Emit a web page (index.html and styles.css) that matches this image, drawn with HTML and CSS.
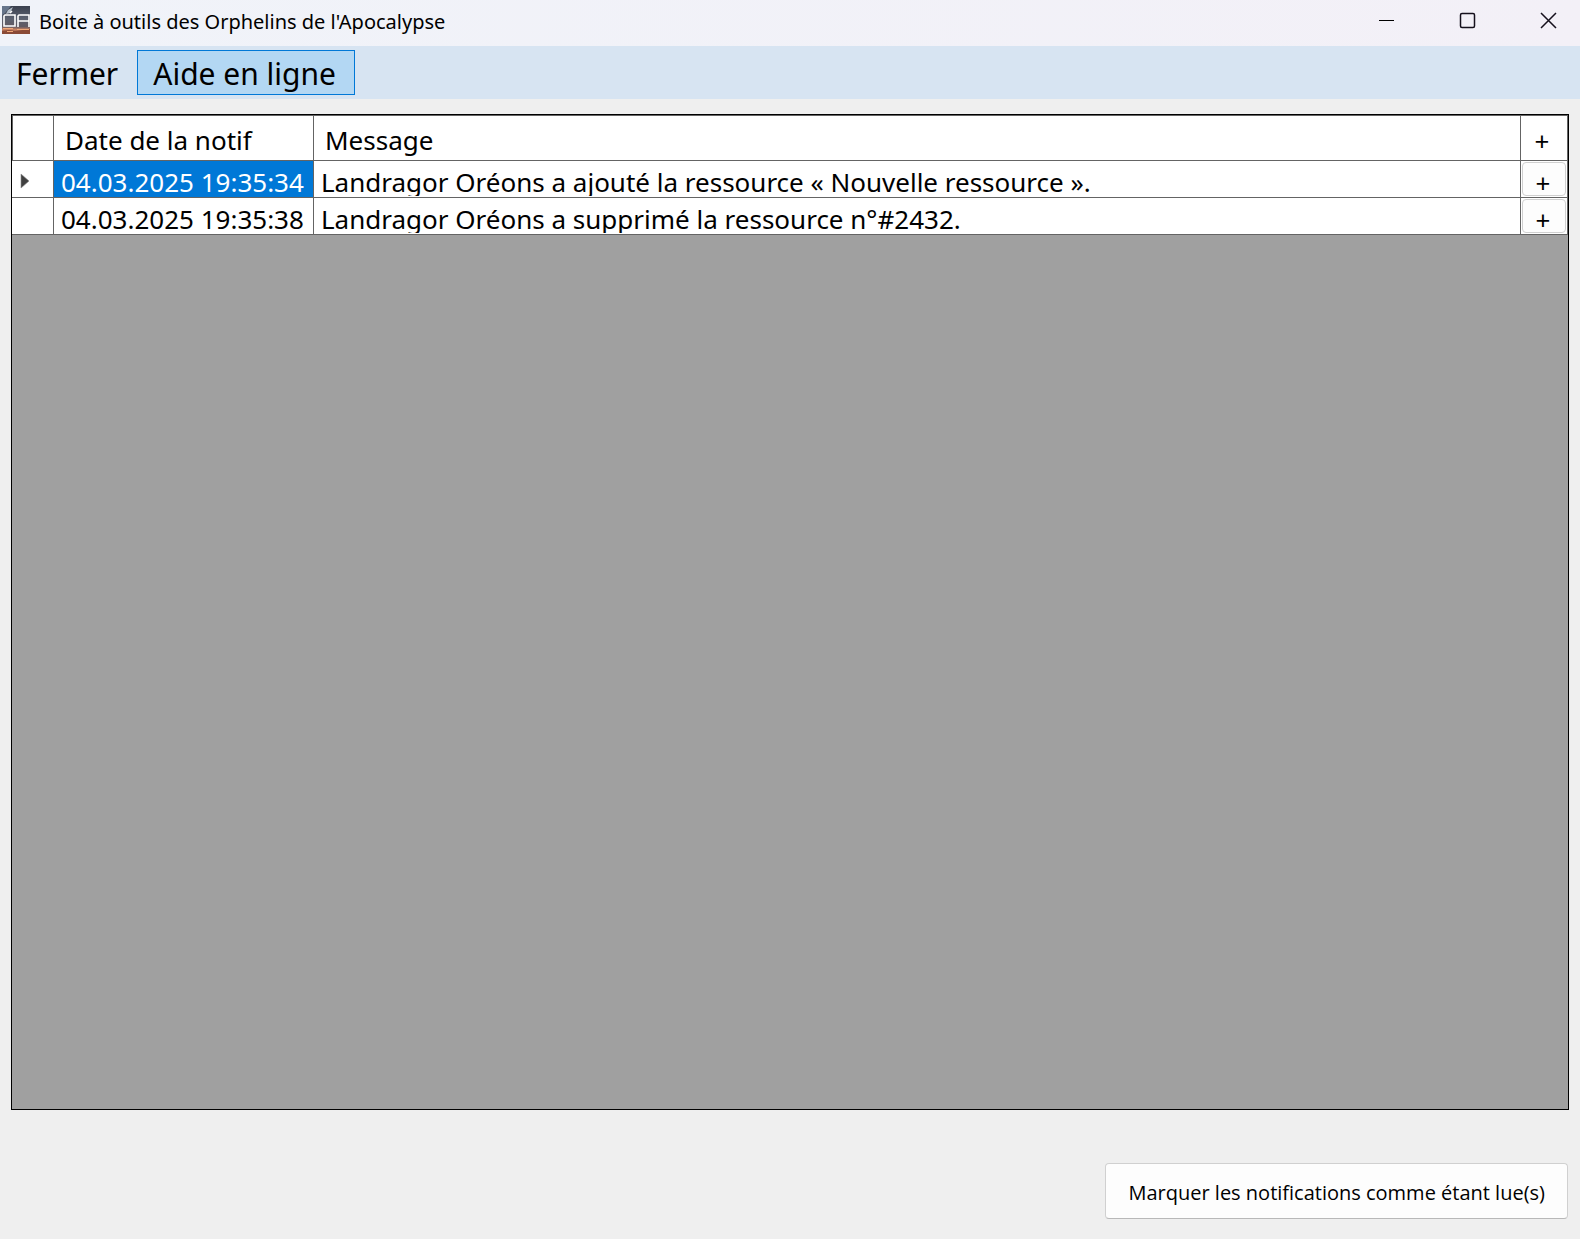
FILE: index.html
```html
<!DOCTYPE html>
<html lang="fr">
<head>
<meta charset="utf-8">
<title>Boite à outils des Orphelins de l'Apocalypse</title>
<link rel="stylesheet" href="styles.css">
</head>
<body>
<header class="titlebar">
  <svg class="app-icon" width="28" height="28" viewBox="0 0 28 28" aria-hidden="true">
    <defs>
      <linearGradient id="sky" x1="0" y1="0" x2="0" y2="1">
        <stop offset="0" stop-color="#3a404e"/>
        <stop offset="0.45" stop-color="#5c6270"/>
        <stop offset="0.74" stop-color="#625a62"/>
        <stop offset="0.84" stop-color="#c98262"/>
        <stop offset="1" stop-color="#7a4636"/>
      </linearGradient>
    </defs>
    <rect width="28" height="28" fill="url(#sky)"/>
    <path d="M0 0h9L3 7 0 9z" fill="#66758a"/>
    <path d="M4 8l2-4 5-3-3 6z" fill="#b9c3cd"/>
    <path d="M0 25l7-1 6 1 15-2v5H0z" fill="#8a4a36"/>
    <path d="M1 22.500h10M15 23.500h12M5 25.500h6" stroke="#f0a878" fill="none"/>
    <path d="M3 9h10v11H2V10zM16 21V10l1-1h10v12M16 15h11M8 7l2-2" fill="none" stroke="#fff" stroke-width="1.600"/>
  </svg>
  <h1 class="title">Boite à outils des Orphelins de l'Apocalypse</h1>
  <div class="window-controls">
    <button class="window-button" type="button" aria-label="Réduire">
      <svg width="17" height="17" viewBox="0 0 17 17"><path d="M1 8.500h15" stroke="#000"/></svg>
    </button>
    <button class="window-button" type="button" aria-label="Agrandir">
      <svg width="17" height="17" viewBox="0 0 17 17"><rect x="1.500" y="1.500" width="14" height="14" rx="1.500" fill="none" stroke="#15101c" stroke-width="1.500"/></svg>
    </button>
    <button class="window-button" type="button" aria-label="Fermer la fenêtre">
      <svg width="17" height="17" viewBox="0 0 17 17"><path d="M1 1l15 15M16 1L1 16" stroke="#15101c" stroke-width="1.500"/></svg>
    </button>
  </div>
</header>
<nav class="menubar">
  <button class="menu-item" type="button">Fermer</button>
  <button class="menu-item menu-item-active" type="button">Aide en ligne</button>
</nav>
<main class="content">
  <div class="grid-panel">
    <table class="grid">
      <colgroup>
        <col class="col-marker">
        <col class="col-date">
        <col>
        <col class="col-action">
      </colgroup>
      <thead>
        <tr>
          <th class="marker" aria-label="Sélection"></th>
          <th>Date de la notif</th>
          <th>Message</th>
          <th class="action">+</th>
        </tr>
      </thead>
      <tbody>
        <tr>
          <td class="marker"><svg class="arrow" width="10" height="16" viewBox="0 0 10 16" aria-hidden="true"><path d="M1 1l8 7-8 7z" fill="#404040" stroke="#8a8a8a" stroke-width="0.600"/></svg></td>
          <td class="selected"><div class="cell-text">04.03.2025 19:35:34</div></td>
          <td><div class="cell-text">Landragor Oréons a ajouté la ressource « Nouvelle ressource ».</div></td>
          <td class="action"><button class="row-button" type="button">+</button></td>
        </tr>
        <tr>
          <td class="marker"></td>
          <td><div class="cell-text">04.03.2025 19:35:38</div></td>
          <td><div class="cell-text">Landragor Oréons a supprimé la ressource n°#2432.</div></td>
          <td class="action"><button class="row-button" type="button">+</button></td>
        </tr>
      </tbody>
    </table>
  </div>
  <footer class="footer">
    <button class="mark-button" type="button">Marquer les notifications comme étant lue(s)</button>
  </footer>
</main>
</body>
</html>
```
FILE: styles.css
```css
* {
  box-sizing: border-box;
}

body {
  margin: 0;
  min-height: 100vh;
  display: flex;
  flex-direction: column;
  background: #efefef;
  color: #000;
  font-family: "Noto Sans", "Open Sans", sans-serif;
}

button {
  margin: 0;
  padding: 0;
  border: 0;
  background: none;
  color: inherit;
  font: inherit;
}

.titlebar {
  display: flex;
  height: 46px;
  padding-left: 2px;
  background: linear-gradient(90deg, #f0f3f9, #f3f0f7);
}

.app-icon {
  margin-top: 6px;
}

.title {
  margin: 0 0 0 9px;
  font-size: 20px;
  font-weight: 400;
  line-height: 44px;
}

.window-controls {
  display: flex;
  margin-left: auto;
}

.window-button {
  display: flex;
  justify-content: center;
  width: 81px;
  height: 46px;
  padding-top: 12px;
  padding-right: 17px;
}

.window-button:last-child {
  width: 64px;
  padding-right: 0;
}

.menubar {
  display: flex;
  height: 53px;
  padding: 4px 0;
  background: #d7e4f2;
}

.menu-item {
  height: 45px;
  padding: 1px 18px 0 15px;
  border: 1px solid transparent;
  font-size: 30px;
  line-height: 43px;
}

.menu-item-active {
  border-color: #0078d7;
  background: #b3d7f3;
}

.content {
  flex: 1;
  display: flex;
  flex-direction: column;
  padding: 15px 11px 20px;
}

.grid-panel {
  flex: 1;
  border: 1px solid #000;
  background: #a0a0a0;
}

.grid {
  width: 100%;
  table-layout: fixed;
  border-collapse: separate;
  border-spacing: 0;
  background: #fff;
  font-size: 26px;
}

.col-marker {
  width: 42px;
}

.col-date {
  width: 260px;
}

.col-action {
  width: 47px;
}

.grid th,
.grid td {
  padding: 0;
  border: solid #646464;
  border-width: 0 1px 1px 0;
}

.grid th {
  height: 46px;
  padding: 4px 0 0 11px;
  border-top-width: 1px;
  font-weight: 400;
  line-height: 40px;
  text-align: left;
}

.grid th.marker {
  border-left-width: 1px;
}

.grid td {
  height: 37px;
  vertical-align: top;
}

.grid th.action {
  padding: 6px 4px 0 0;
  line-height: 38px;
  text-align: center;
}

.cell-text {
  height: 35px;
  padding-left: 7px;
  overflow: hidden;
  line-height: 43px;
  white-space: nowrap;
}

.selected {
  background: #0078d7;
  color: #fff;
}

.arrow {
  display: block;
  margin: 12px 0 0 8px;
}

.row-button {
  display: block;
  width: 44px;
  height: 34px;
  margin: 1px;
  padding-right: 2px;
  border: 1px solid #d0d0d0;
  border-radius: 4px;
  background: #fdfdfd;
  line-height: 40px;
  text-align: center;
}

.footer {
  display: flex;
  justify-content: flex-end;
  padding: 53px 1px 0 0;
}

.mark-button {
  height: 56px;
  padding: 2px 22px 0;
  border: 1px solid #d0d0d0;
  border-bottom-color: #b8b8b8;
  border-radius: 4px;
  background: #fdfdfd;
  font-family: "Open Sans", "Noto Sans", sans-serif;
  font-size: 20px;
}
```
